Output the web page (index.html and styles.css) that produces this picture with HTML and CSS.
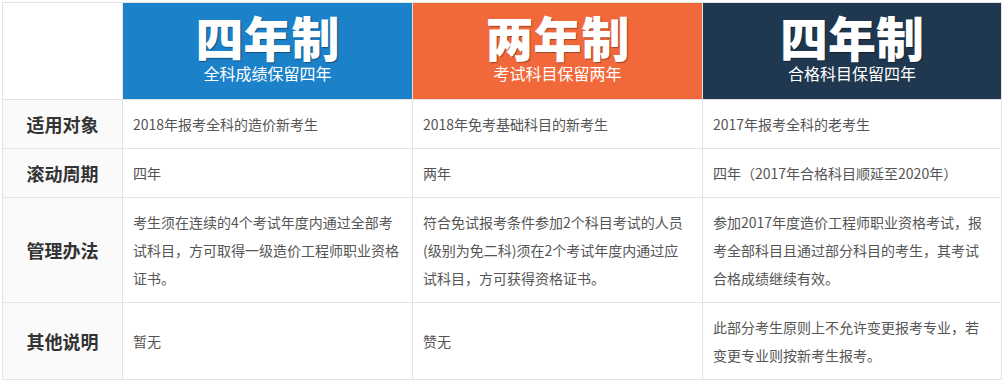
FILE: index.html
```html
<!DOCTYPE html>
<html lang="zh-CN">
<head>
<meta charset="utf-8">
<title>造价工程师滚动周期</title>
<link rel="stylesheet" href="styles.css">
</head>
<body>
<div class="page">
  <div class="grid">
    <div class="corner"></div>
    <div class="head blue"><div class="title">四年制</div><div class="sub">全科成绩保留四年</div></div>
    <div class="head orange"><div class="title">两年制</div><div class="sub">考试科目保留两年</div></div>
    <div class="head navy"><div class="title">四年制</div><div class="sub">合格科目保留四年</div></div>

    <div class="label">适用对象</div>
    <div class="cell">2018年报考全科的造价新考生</div>
    <div class="cell">2018年免考基础科目的新考生</div>
    <div class="cell">2017年报考全科的老考生</div>

    <div class="label">滚动周期</div>
    <div class="cell">四年</div>
    <div class="cell">两年</div>
    <div class="cell">四年（2017年合格科目顺延至2020年）</div>

    <div class="label">管理办法</div>
    <div class="cell">考生须在连续的4个考试年度内通过全部考<br>试科目，方可取得一级造价工程师职业资格<br>证书。</div>
    <div class="cell">符合免试报考条件参加2个科目考试的人员<br>(级别为免二科)须在2个考试年度内通过应<br>试科目，方可获得资格证书。</div>
    <div class="cell">参加2017年度造价工程师职业资格考试，报<br>考全部科目且通过部分科目的考生，其考试<br>合格成绩继续有效。</div>

    <div class="label">其他说明</div>
    <div class="cell">暂无</div>
    <div class="cell">赞无</div>
    <div class="cell">此部分考生原则上不允许变更报考专业，若<br>变更专业则按新考生报考。</div>
  </div>
</div>
</body>
</html>
```
FILE: styles.css
```css
* { box-sizing: border-box; }
html, body { margin: 0; padding: 0; background: #fff; }
body {
  font-family: "Noto Sans CJK SC", "Noto Sans", sans-serif;
  color: #555;
}
.page { padding: 2px; }
.grid {
  display: grid;
  grid-template-columns: 119px 289px 289px 298px;
  grid-template-rows: 96px 48px 48px 104px 76px;
  gap: 1px;
  padding: 1px;
  width: 1000px;
  background: #e3e3e3;
}
.grid > div { background: #fff; }
.corner { background: #fff; }
.head {
  display: flex;
  flex-direction: column;
  align-items: center;
  color: #fff;
  padding-top: 8px;
}
.grid > .blue { background: #1b81c9; }
.grid > .orange { background: #f1693a; }
.grid > .navy { background: #1f3850; }
.title {
  font-size: 48px;
  line-height: 50px;
  font-weight: 900;
  text-shadow: 1px 1px 1px rgba(0, 0, 0, 0.35);
}
.sub {
  font-size: 16px;
  line-height: 24px;
}
.grid > .label {
  background: #fafafa;
  display: flex;
  align-items: center;
  justify-content: center;
  font-size: 18px;
  font-weight: 700;
  color: #333;
}
.cell {
  display: flex;
  align-items: center;
  padding: 10px;
  font-size: 14px;
  line-height: 28px;
  white-space: nowrap;
}
```
